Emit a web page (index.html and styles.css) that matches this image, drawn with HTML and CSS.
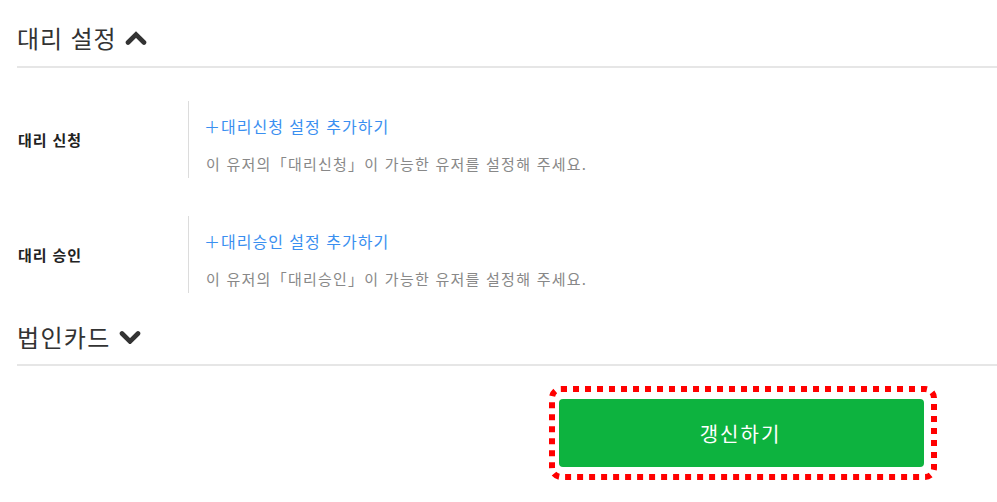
FILE: index.html
```html
<!DOCTYPE html>
<html lang="ko">
<head>
<meta charset="utf-8">
<link rel="stylesheet" href="styles.css">
</head>
<body>
<div class="page">
  <div class="section-head">
    <span class="section-title">대리 설정</span>
    <svg class="chev" width="22" height="14" viewBox="0 0 22 14"><polyline points="3,11.5 11,3.5 19,11.5" fill="none" stroke="#333" stroke-width="4.6" stroke-linecap="round" stroke-linejoin="miter"/></svg>
  </div>
  <div class="rows">
    <div class="row">
      <div class="label">대리 신청</div>
      <div class="content">
        <a class="add-link">＋대리신청 설정 추가하기</a>
        <p class="desc">이 유저의「대리신청」이 가능한 유저를 설정해 주세요.</p>
      </div>
    </div>
    <div class="row">
      <div class="label">대리 승인</div>
      <div class="content">
        <a class="add-link">＋대리승인 설정 추가하기</a>
        <p class="desc">이 유저의「대리승인」이 가능한 유저를 설정해 주세요.</p>
      </div>
    </div>
  </div>
  <div class="section-head second">
    <span class="section-title">법인카드</span>
    <svg class="chev" width="22" height="14" viewBox="0 0 22 14"><polyline points="3,3.5 11,11.5 19,3.5" fill="none" stroke="#333" stroke-width="4.6" stroke-linecap="round" stroke-linejoin="miter"/></svg>
  </div>
  <div class="actions">
    <div class="btn-wrap">
      <button class="update-btn">갱신하기</button>
      <svg class="focus-ring" width="388" height="94" viewBox="0 0 388 94"><rect x="3" y="3" width="382" height="88" rx="9" ry="9" fill="none" stroke="#ff0000" stroke-width="6" stroke-dasharray="6 6"/></svg>
    </div>
  </div>
</div>
</body>
</html>
```
FILE: styles.css
```css
html, body {
  margin: 0;
  padding: 0;
  background: #fff;
}
body {
  font-family: "Noto Sans CJK KR", "Noto Sans", sans-serif;
  color: #333;
}
.page {
  padding-left: 17px;
}
.section-head {
  display: flex;
  align-items: center;
  gap: 8px;
  height: 68px;
  border-bottom: 2px solid #e6e6e6;
  box-sizing: border-box;
  padding-top: 9px;
}
.section-head.second {
  height: 73px;
  padding-top: 17px;
}
.section-title {
  font-size: 24px;
  line-height: 30px;
  letter-spacing: 0.9px;
  color: #333;
}
.second .section-title {
  letter-spacing: 1.3px;
}
.chev {
  display: block;
}
.rows {
  padding-top: 33px;
  display: flex;
  flex-direction: column;
  gap: 38px;
}
.row {
  display: flex;
  height: 77px;
}
.label {
  width: 172px;
  border-right: 1px solid #dcdcdc;
  display: flex;
  align-items: center;
  font-size: 15px;
  font-weight: 700;
  letter-spacing: 0.9px;
  color: #222;
  padding-left: 1px;
  box-sizing: border-box;
}
.content {
  padding-left: 17px;
  display: flex;
  flex-direction: column;
  padding-top: 13px;
}
.add-link {
  font-size: 16px;
  line-height: 24px;
  letter-spacing: 1px;
  color: #3a8ff0;
  cursor: pointer;
  margin-left: -2px;
}
.desc {
  margin: 15px 0 0;
  font-size: 15px;
  line-height: 22px;
  letter-spacing: 1.25px;
  color: #888;
}
.actions {
  display: flex;
  justify-content: flex-end;
  padding-right: 73px;
  padding-top: 33px;
  padding-bottom: 20px;
}
.btn-wrap {
  position: relative;
  width: 365px;
  height: 68px;
}
.update-btn {
  display: block;
  width: 365px;
  height: 68px;
  background: #0db33f;
  color: #fff;
  border: none;
  border-radius: 4px;
  font-family: "Noto Sans CJK KR", "Noto Sans", sans-serif;
  font-size: 20px;
  letter-spacing: 2px;
  padding-left: 4px;
}
.focus-ring {
  position: absolute;
  left: -10px;
  top: -13px;
  pointer-events: none;
}
```
